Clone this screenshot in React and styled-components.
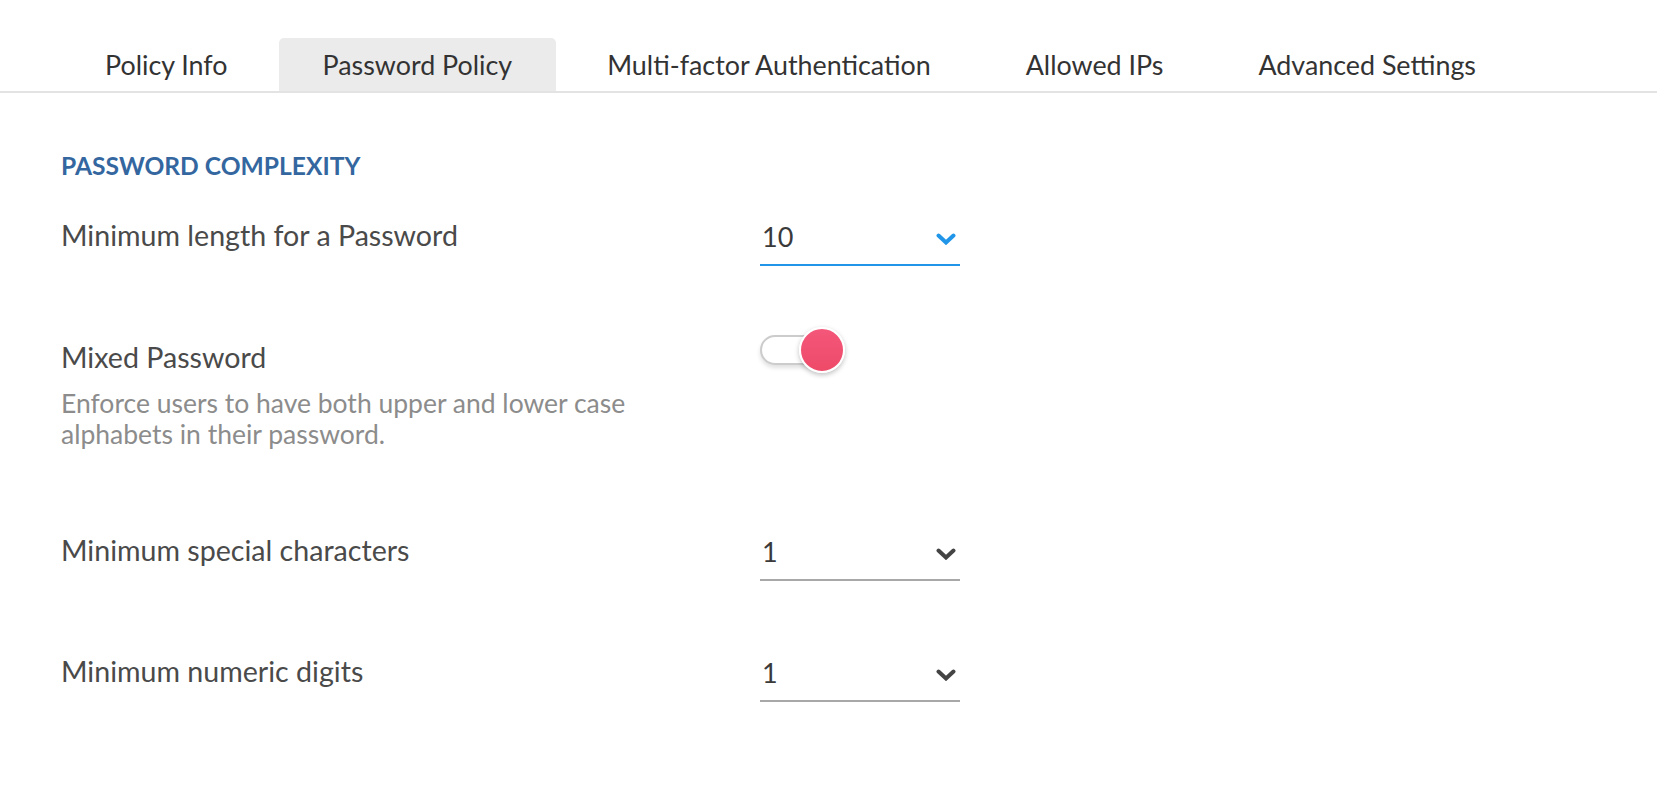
import React, { useState } from "react";
import styled, { createGlobalStyle } from "styled-components";

const Global = createGlobalStyle`
  html, body {
    margin: 0;
    background: #ffffff;
    font-family: Lato, "Open Sans", sans-serif;
  }
`;

const TabBar = styled.div`
  display: flex;
  gap: 7px;
  padding: 38px 0 0 61px;
  border-bottom: 2px solid #e3e3e3;
`;

const Tab = styled.div`
  height: 53px;
  line-height: 54px;
  padding: 0 44px;
  font-size: 26.85px;
  color: #333333;
  background: ${(p) => (p.active ? "#ebebeb" : "transparent")};
  border-radius: 5px 5px 0 0;
  cursor: pointer;
  white-space: nowrap;
`;

const Content = styled.div`
  padding: 0 0 40px 61px;
`;

const SectionTitle = styled.div`
  margin-top: 58px;
  font-size: 24.6px;
  line-height: 30px;
  font-weight: 700;
  color: #34679f;
`;

const Row = styled.div`
  display: flex;
  align-items: flex-start;
  margin-top: ${(p) => p.gap}px;
`;

const LabelCol = styled.div`
  width: 699px;
  flex: none;
`;

const Label = styled.div`
  font-size: 28.6px;
  line-height: 30px;
  color: #4a4a4a;
`;

const Desc = styled.div`
  margin-top: 16px;
  width: 620px;
  font-size: 26.5px;
  line-height: 31px;
  color: #8c8c8c;
`;

const Select = styled.div`
  width: 194px;
  height: 42px;
  padding: 2px 4px 0 2px;
  display: flex;
  align-items: flex-start;
  justify-content: space-between;
  border-bottom: 2px solid ${(p) => (p.focused ? "#2196e8" : "#a8a8a8")};
  font-size: 27px;
  line-height: 30px;
  color: #3a3a3a;
  cursor: pointer;
`;

const Chevron = styled.svg`
  margin-top: 11px;
  flex: none;
`;

const ToggleWrap = styled.div`
  position: relative;
  margin-top: -15px;
  width: 86px;
  height: 46px;
  cursor: pointer;
`;

const Track = styled.div`
  position: absolute;
  left: 0;
  top: 8px;
  width: 72px;
  height: 26px;
  border: 2px solid #cccccc;
  border-radius: 16px;
  background: #ffffff;
  box-shadow: 0 3px 4px rgba(0, 0, 0, 0.12);
`;

const Knob = styled.div`
  position: absolute;
  left: 39px;
  top: 0;
  width: 42px;
  height: 42px;
  border-radius: 50%;
  border: 2px solid #ffffff;
  background: linear-gradient(180deg, #f4577a 0%, #ee4a68 100%);
  box-shadow: 0 2px 5px rgba(0, 0, 0, 0.25);
`;

const ChevronDown = ({ color }) => (
  <Chevron width="20" height="12" viewBox="0 0 20 12">
    <polyline
      points="2.5,2.5 10,9.5 17.5,2.5"
      fill="none"
      stroke={color}
      strokeWidth="4"
      strokeLinecap="round"
      strokeLinejoin="miter"
    />
  </Chevron>
);

const Dropdown = ({ value, focused }) => (
  <Select focused={focused}>
    <span>{value}</span>
    <ChevronDown color={focused ? "#2196e8" : "#444444"} />
  </Select>
);

const tabs = [
  "Policy Info",
  "Password Policy",
  "Multi-factor Authentication",
  "Allowed IPs",
  "Advanced Settings",
];

export default function App() {
  const [active, setActive] = useState(1);
  return (
    <>
      <Global />
      <TabBar>
        {tabs.map((t, i) => (
          <Tab key={t} active={i === active} onClick={() => setActive(i)}>
            {t}
          </Tab>
        ))}
      </TabBar>
      <Content>
        <SectionTitle>PASSWORD COMPLEXITY</SectionTitle>
        <Row gap={39}>
          <LabelCol>
            <Label>Minimum length for a Password</Label>
          </LabelCol>
          <Dropdown value="10" focused />
        </Row>
        <Row gap={76}>
          <LabelCol>
            <Label>Mixed Password</Label>
            <Desc>
              Enforce users to have both upper and lower case alphabets in
              their password.
            </Desc>
          </LabelCol>
          <ToggleWrap>
            <Track />
            <Knob />
          </ToggleWrap>
        </Row>
        <Row gap={85}>
          <LabelCol>
            <Label>Minimum special characters</Label>
          </LabelCol>
          <Dropdown value="1" />
        </Row>
        <Row gap={75}>
          <LabelCol>
            <Label>Minimum numeric digits</Label>
          </LabelCol>
          <Dropdown value="1" />
        </Row>
      </Content>
    </>
  );
}
